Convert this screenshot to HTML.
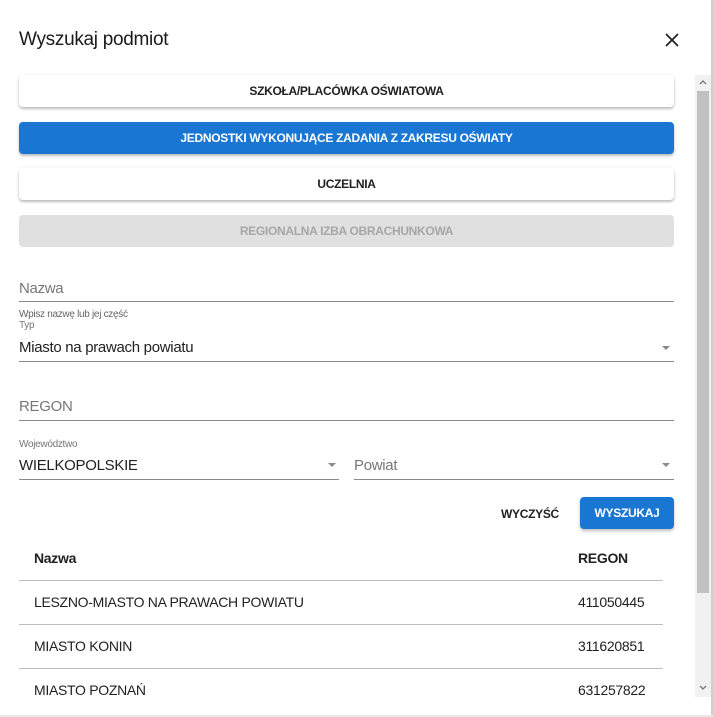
<!DOCTYPE html>
<html><head><meta charset="utf-8"><style>
*{margin:0;padding:0;box-sizing:border-box}
body{width:713px;height:717px;background:#fff;font-family:"Liberation Sans",sans-serif;color:#212121;position:relative;overflow:hidden}
.a{position:absolute;white-space:nowrap}
.btn{position:absolute;left:19px;width:655px;height:32px;border-radius:4px;font-size:12px;font-weight:bold;letter-spacing:-0.3px;display:flex;align-items:center;justify-content:center;background:#fff;box-shadow:0 2px 2px rgba(0,0,0,.2),0 1px 4px rgba(0,0,0,.1)}
.line{position:absolute;height:1px;background:#8a8a8a}
.tl{position:absolute;left:19px;width:644px;height:1px;background:#bdbdbd}
.arr{position:absolute;width:0;height:0;border-left:4px solid transparent;border-right:4px solid transparent;border-top:4px solid #8a8a8a}
.c{letter-spacing:-0.3px}
</style></head><body>
<div class="a" style="left:19px;top:29px;font-size:19px;letter-spacing:-0.3px;color:#1a1a1a">Wyszukaj podmiot</div>
<svg class="a" style="left:665px;top:33px" width="14" height="14" viewBox="0 0 14 14"><path d="M1 1L13 13M13 1L1 13" stroke="#222" stroke-width="1.8"/></svg>

<div class="btn" style="top:75px">SZKOŁA/PLACÓWKA OŚWIATOWA</div>
<div class="btn" style="top:122px;background:#1976d2;color:#fff">JEDNOSTKI WYKONUJĄCE ZADANIA Z ZAKRESU OŚWIATY</div>
<div class="btn" style="top:168px">UCZELNIA</div>
<div class="btn" style="top:215px;background:#e0e0e0;color:#a6a6a6;box-shadow:none">REGIONALNA IZBA OBRACHUNKOWA</div>

<div class="a c" style="left:19px;top:280px;font-size:15px;color:#777">Nazwa</div>
<div class="line" style="left:19px;top:301px;width:655px"></div>
<div class="a c" style="left:19px;top:309px;font-size:10px;color:#666">Wpisz nazwę lub jej część</div>
<div class="a c" style="left:19px;top:320px;font-size:10px;color:#777">Typ</div>
<div class="a c" style="left:19px;top:339px;font-size:15px">Miasto na prawach powiatu</div>
<div class="arr" style="left:662px;top:346px"></div>
<div class="line" style="left:19px;top:361px;width:655px"></div>

<div class="a c" style="left:19px;top:398px;font-size:15px;color:#777">REGON</div>
<div class="line" style="left:19px;top:420px;width:655px"></div>

<div class="a c" style="left:19px;top:439px;font-size:10px;color:#777">Województwo</div>
<div class="a c" style="left:19px;top:457px;font-size:15px">WIELKOPOLSKIE</div>
<div class="arr" style="left:328px;top:463px"></div>
<div class="line" style="left:19px;top:479px;width:320px"></div>
<div class="a c" style="left:354px;top:457px;font-size:15px;color:#777">Powiat</div>
<div class="arr" style="left:662px;top:463px"></div>
<div class="line" style="left:354px;top:479px;width:320px"></div>

<div class="a c" style="left:501px;top:507px;font-size:12px;font-weight:bold">WYCZYŚĆ</div>
<div class="a" style="left:580px;top:497px;width:94px;height:32px;background:#1976d2;color:#fff;border-radius:4px;font-size:12px;font-weight:bold;letter-spacing:-0.3px;display:flex;align-items:center;justify-content:center;box-shadow:0 2px 3px rgba(0,0,0,.25)">WYSZUKAJ</div>

<div class="a c" style="left:34px;top:550px;font-size:14px;font-weight:bold">Nazwa</div>
<div class="a c" style="left:578px;top:550px;font-size:14px;font-weight:bold">REGON</div>
<div class="tl" style="top:580px"></div>
<div class="a c" style="left:34px;top:594px;font-size:14px">LESZNO-MIASTO NA PRAWACH POWIATU</div>
<div class="a c" style="left:578px;top:594px;font-size:14px">411050445</div>
<div class="tl" style="top:624px"></div>
<div class="a c" style="left:34px;top:638px;font-size:14px">MIASTO KONIN</div>
<div class="a c" style="left:578px;top:638px;font-size:14px">311620851</div>
<div class="tl" style="top:668px"></div>
<div class="a c" style="left:34px;top:682px;font-size:14px">MIASTO POZNAŃ</div>
<div class="a c" style="left:578px;top:682px;font-size:14px">631257822</div>

<div class="a" style="left:695px;top:75px;width:16px;height:622px;background:#f1f1f1"></div>
<div class="a" style="left:697px;top:91px;width:12px;height:502px;background:#c1c1c1"></div>
<svg class="a" style="left:699px;top:79px" width="8" height="6"><path d="M1 5L4 2L7 5" stroke="#777" fill="none" stroke-width="1.3"/></svg>
<svg class="a" style="left:699px;top:685px" width="8" height="6"><path d="M1 1L4 4L7 1" stroke="#777" fill="none" stroke-width="1.3"/></svg>
<div class="a" style="left:711px;top:0;width:2px;height:717px;background:#cfcfcf"></div>
<div class="a" style="left:0;top:715px;width:713px;height:2px;background:#e8e8e8"></div>
</body></html>
